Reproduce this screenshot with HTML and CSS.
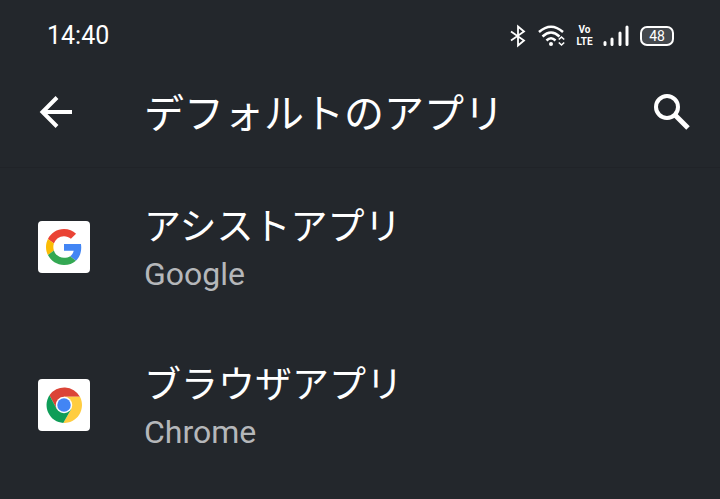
FILE: index.html
```html
<!DOCTYPE html>
<html lang="ja">
<head>
    <meta charset="UTF-8">
    <meta name="viewport" content="width=device-width, initial-scale=1.0">
    <title>デフォルトのアプリ</title>
    <link rel="stylesheet" href="styles.css">
</head>
<body>
    <!-- Status bar -->
    <div class="status-bar">
        <time class="clock">14:40</time>
        <div class="status-icons">
            <svg class="bluetooth" width="18" height="24" viewBox="0 0 18 24" role="img" aria-label="Bluetooth">
                <path d="M2 7.500L15 16.500L9 21.500V2.500L15 7.500L2 16.500" fill="none" stroke="#fff" stroke-width="1.800"/>
            </svg>
            <svg class="wifi" width="28" height="24" viewBox="0 0 28 24" role="img" aria-label="Wi-Fi">
                <g fill="none" stroke="#fff" stroke-width="2.500">
                    <path d="M1 8Q13 -2.500 25 8"/>
                    <path d="M4.500 12.500Q13 4.500 21.500 12.500"/>
                    <path d="M8.500 16.500Q13 12 17.500 16.500"/>
                </g>
                <circle cx="13" cy="20" r="2" fill="#fff"/>
                <path d="M20.800 15.500L23.500 13L26.200 15.500M20.800 18.500L23.500 21L26.200 18.500" fill="none" stroke="#fff" stroke-width="1.600"/>
            </svg>
            <span class="volte"><span>Vo</span><span>LTE</span></span>
            <svg class="signal" width="26" height="24" viewBox="0 0 26 24" role="img" aria-label="電波強度">
                <path d="M2 18.500V20.500M9 15V20.500M17 9V20.500M24 3V20.500" fill="none" stroke="#fff" stroke-width="3" stroke-linecap="round"/>
            </svg>
            <span class="battery">48</span>
        </div>
    </div>

    <!-- App bar -->
    <header class="app-bar">
        <button type="button" class="icon-button" aria-label="戻る">
            <svg width="36" height="36" viewBox="0 0 36 36">
                <path d="M34 18H5M19 3.500L4.500 18L19 32.500" fill="none" stroke="#fff" stroke-width="4"/>
            </svg>
        </button>
        <h1>デフォルトのアプリ</h1>
        <button type="button" class="icon-button" aria-label="検索">
            <svg width="36" height="36" viewBox="0 0 36 36">
                <circle cx="13" cy="13" r="11" fill="none" stroke="#fff" stroke-width="4"/>
                <path d="M21 21L34 34" fill="none" stroke="#fff" stroke-width="5"/>
            </svg>
        </button>
    </header>

    <!-- Default app list -->
    <main class="app-list">
        <a href="#assist" class="app-row">
            <span class="app-icon">
                <svg width="36" height="36" viewBox="0 0 48 48">
                    <path fill="#ea4335" d="M24 9.500c3.540 0 6.710 1.220 9.210 3.600l6.850-6.850C35.900 2.380 30.470 0 24 0 14.620 0 6.510 5.380 2.560 13.220l7.980 6.190C12.430 13.720 17.740 9.500 24 9.500z"/>
                    <path fill="#4285f4" d="M46.980 24.550c0-1.570-.15-3.090-.38-4.550H24v9.020h12.940c-.58 2.960-2.260 5.480-4.780 7.180l7.730 6c4.510-4.180 7.090-10.360 7.090-17.650z"/>
                    <path fill="#fbbc05" d="M10.530 28.590c-.48-1.450-.76-2.990-.76-4.590s.27-3.140.76-4.590l-7.980-6.190C.92 16.460 0 20.120 0 24c0 3.880.92 7.540 2.560 10.780l7.970-6.190z"/>
                    <path fill="#34a853" d="M24 48c6.480 0 11.930-2.130 15.890-5.810l-7.730-6c-2.150 1.450-4.920 2.300-8.160 2.300-6.260 0-11.570-4.220-13.470-9.910l-7.980 6.190C6.510 42.620 14.620 48 24 48z"/>
                </svg>
            </span>
            <span class="app-text">
                <span class="app-title">アシストアプリ</span>
                <span class="app-summary">Google</span>
            </span>
        </a>
        <a href="#browser" class="app-row">
            <span class="app-icon">
                <svg width="36" height="36" viewBox="0 0 48 48">
                    <path fill="#db4437" d="M4.600 11A24 24 0 0 1 45.300 13H24L14.500 29.500Z"/>
                    <path fill="#ffcd40" d="M45.300 13H24L33.500 29.500L23 48A24 24 0 0 0 45.300 13Z"/>
                    <path fill="#0f9d58" d="M4.600 11A24 24 0 0 0 23 48L33.500 29.500H14.500Z"/>
                    <circle cx="24" cy="24" r="11" fill="#fff"/>
                    <circle cx="24" cy="24" r="9" fill="#4285f4"/>
                </svg>
            </span>
            <span class="app-text">
                <span class="app-title">ブラウザアプリ</span>
                <span class="app-summary">Chrome</span>
            </span>
        </a>
    </main>
</body>
</html>
```
FILE: styles.css
```css
* {
    box-sizing: border-box;
}

body {
    margin: 0;
    background-color: #23272c;
    color: #fff;
    font-family: Roboto, "Noto Sans CJK JP", sans-serif;
}

svg {
    display: block;
}

.status-bar {
    display: flex;
    align-items: center;
    justify-content: space-between;
    height: 72px;
    padding: 0 46px 0 47px;
}

.clock {
    font-size: 25px;
    line-height: 28px;
}

.status-icons {
    display: flex;
    align-items: center;
    gap: 11px;
}

.volte {
    display: flex;
    flex-direction: column;
    align-items: center;
    width: 15px;
    font-family: "Liberation Sans Narrow", Roboto, sans-serif;
    font-size: 10px;
    font-weight: bold;
    line-height: 12px;
}

.battery {
    width: 34px;
    height: 20px;
    border: 2px solid #fff;
    border-radius: 7px;
    background-color: #44484d;
    font-size: 14px;
    line-height: 16px;
    text-align: center;
}

.app-bar {
    display: flex;
    align-items: center;
    height: 96px;
    padding: 0 30px 16px 38px;
    border-bottom: 1px solid #202328;
}

.icon-button {
    padding: 0;
    border: none;
    background: none;
    cursor: pointer;
}

h1 {
    flex: 1;
    margin: 0 0 0 70px;
    padding-top: 6px;
    font-size: 40px;
    font-weight: normal;
    line-height: 48px;
}

.app-row {
    display: flex;
    align-items: center;
    gap: 54px;
    height: 158px;
    padding: 0 38px;
    color: #fff;
    text-decoration: none;
}

.app-icon {
    display: flex;
    align-items: center;
    justify-content: center;
    width: 52px;
    height: 52px;
    border-radius: 4px;
    background-color: #fff;
}

.app-text {
    display: flex;
    flex-direction: column;
    padding-top: 6px;
}

.app-title {
    font-size: 37px;
    line-height: 48px;
}

.app-summary {
    color: #b5b7ba;
    font-size: 32px;
    line-height: 44px;
}
```
